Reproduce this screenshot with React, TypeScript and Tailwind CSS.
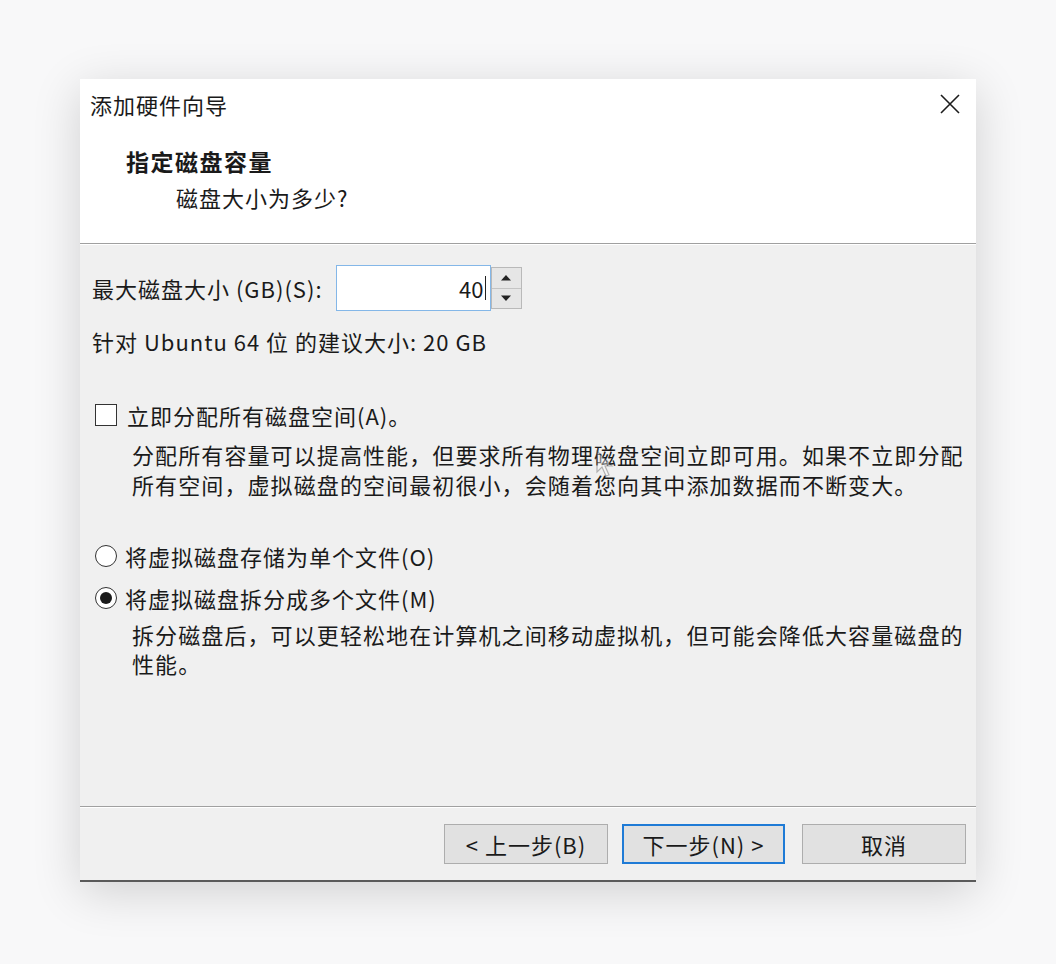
import React from 'react';

const font = { fontFamily: '"Noto Sans CJK SC", "Microsoft YaHei", sans-serif' };

function CloseIcon() {
  return (
    <svg width="22" height="22" viewBox="0 0 22 22" className="text-[#1c1c1c]">
      <path d="M2 2 L20 20 M20 2 L2 20" stroke="currentColor" strokeWidth="1.6" fill="none" />
    </svg>
  );
}

function Caret({ up }: { up?: boolean }) {
  return (
    <svg width="12" height="7" viewBox="0 0 12 7">
      {up ? <path d="M1 6.5 L6 1 L11 6.5 Z" fill="#222" /> : <path d="M1 0.5 L6 6 L11 0.5 Z" fill="#222" />}
    </svg>
  );
}

function Checkbox() {
  return <span className="inline-block w-[22px] h-[22px] border-[1.5px] border-[#333] bg-white shrink-0" />;
}

function Radio({ checked }: { checked?: boolean }) {
  return (
    <span className="w-[22px] h-[22px] rounded-full border-[1.5px] border-[#333] bg-white shrink-0 flex items-center justify-center">
      {checked && <span className="w-[12px] h-[12px] rounded-full bg-[#1a1a1a]" />}
    </span>
  );
}

function Button({ children, primary, className = '' }: { children: React.ReactNode; primary?: boolean; className?: string }) {
  return (
    <button
      className={
        'h-[40px] flex items-center justify-center bg-[#e1e1e1] text-[22px] text-[#1a1a1a] tracking-[1px] ' +
        (primary ? 'w-[163px] border-2 border-[#1f7bd6] ' : 'w-[164px] border border-[#adadad] ') +
        className
      }
    >
      {children}
    </button>
  );
}

export default function App() {
  return (
    <div className="w-[1056px] h-[964px] bg-[#f8f8f9] pt-[79px] pl-[80px]" style={font}>
      <div className="w-[896px] h-[803px] flex flex-col bg-[#f0f0f0] shadow-[0_10px_45px_rgba(0,0,0,0.16)] text-[#1a1a1a] tracking-[1px]">
        {/* header */}
        <div className="h-[164px] bg-white relative pt-[10px]">
          <div className="pl-[10px] text-[22px] leading-[30px]">添加硬件向导</div>
          <div className="absolute right-[15px] top-[14px]">
            <CloseIcon />
          </div>
          <div className="pl-[46px] mt-[27px] text-[23px] leading-[30px] font-bold tracking-[1.5px]">指定磁盘容量</div>
          <div className="pl-[96px] mt-[6px] text-[22px] leading-[30px]">磁盘大小为多少?</div>
        </div>
        <div className="h-px bg-[#a0a0a0]" />
        <div className="h-px bg-white" />

        {/* body */}
        <div className="flex-1 pl-[12px] text-[22px] relative">
          <div className="mt-[20px] flex items-center h-[46px]">
            <span className="leading-[30px]">最大磁盘大小 (GB)(S):</span>
            <div className="ml-[13px] flex items-center">
              <div className="w-[155px] h-[46px] bg-white border-[1.5px] border-[#84b7e8] flex items-center justify-end pr-[4px]">
                <span className="leading-[30px] tracking-normal">40</span>
                <span className="w-px h-[24px] bg-[#222] ml-[1px]" />
              </div>
              <div className="w-[31px] h-[42px] border border-[#b9b9b9] bg-[#e6e6e6] flex flex-col">
                <div className="flex-1 flex items-center justify-center border-b border-[#c4c4c4]">
                  <Caret up />
                </div>
                <div className="flex-1 flex items-center justify-center">
                  <Caret />
                </div>
              </div>
            </div>
          </div>
          <div className="mt-[15px] leading-[30px]">针对 Ubuntu 64 位 的建议大小: 20 GB</div>

          <div className="mt-[44px] flex items-center gap-[10px] pl-[3px] h-[30px]">
            <Checkbox />
            <span className="leading-[30px]">立即分配所有磁盘空间(A)。</span>
          </div>
          <div className="mt-[9px] pl-[40px] leading-[30px] tracking-[1.1px]">
            分配所有容量可以提高性能，但要求所有物理磁盘空间立即可用。如果不立即分配
            <br />
            所有空间，虚拟磁盘的空间最初很小，会随着您向其中添加数据而不断变大。
          </div>

          <div className="mt-[42px] flex items-center gap-[8px] pl-[3px] h-[30px]">
            <Radio />
            <span>将虚拟磁盘存储为单个文件(O)</span>
          </div>
          <div className="mt-[12px] flex items-center gap-[8px] pl-[3px] h-[30px]">
            <Radio checked />
            <span>将虚拟磁盘拆分成多个文件(M)</span>
          </div>
          <div className="mt-[7px] pl-[40px] leading-[29px] tracking-[1.1px]">
            拆分磁盘后，可以更轻松地在计算机之间移动虚拟机，但可能会降低大容量磁盘的
            <br />
            性能。
          </div>

          {/* mouse pointer ghost */}
          <svg
            className="absolute left-[516px] top-[205px] opacity-40"
            width="20"
            height="28"
            viewBox="0 0 20 28"
          >
            <path d="M1 1 L1 22 L6 17 L10 26 L13 25 L9 16 L16 16 Z" fill="#fff" stroke="#555" strokeWidth="1.2" />
          </svg>
        </div>

        <div className="h-px bg-[#a0a0a0]" />
        <div className="h-px bg-white" />
        {/* footer */}
        <div className="h-[72px] flex items-center justify-end pr-[10px]">
          <Button>&lt; 上一步(B)</Button>
          <Button primary className="ml-[14px]">下一步(N) &gt;</Button>
          <Button className="ml-[17px]">取消</Button>
        </div>
        <div className="h-[2px] bg-[#5a5a5a]" />
      </div>
    </div>
  );
}
